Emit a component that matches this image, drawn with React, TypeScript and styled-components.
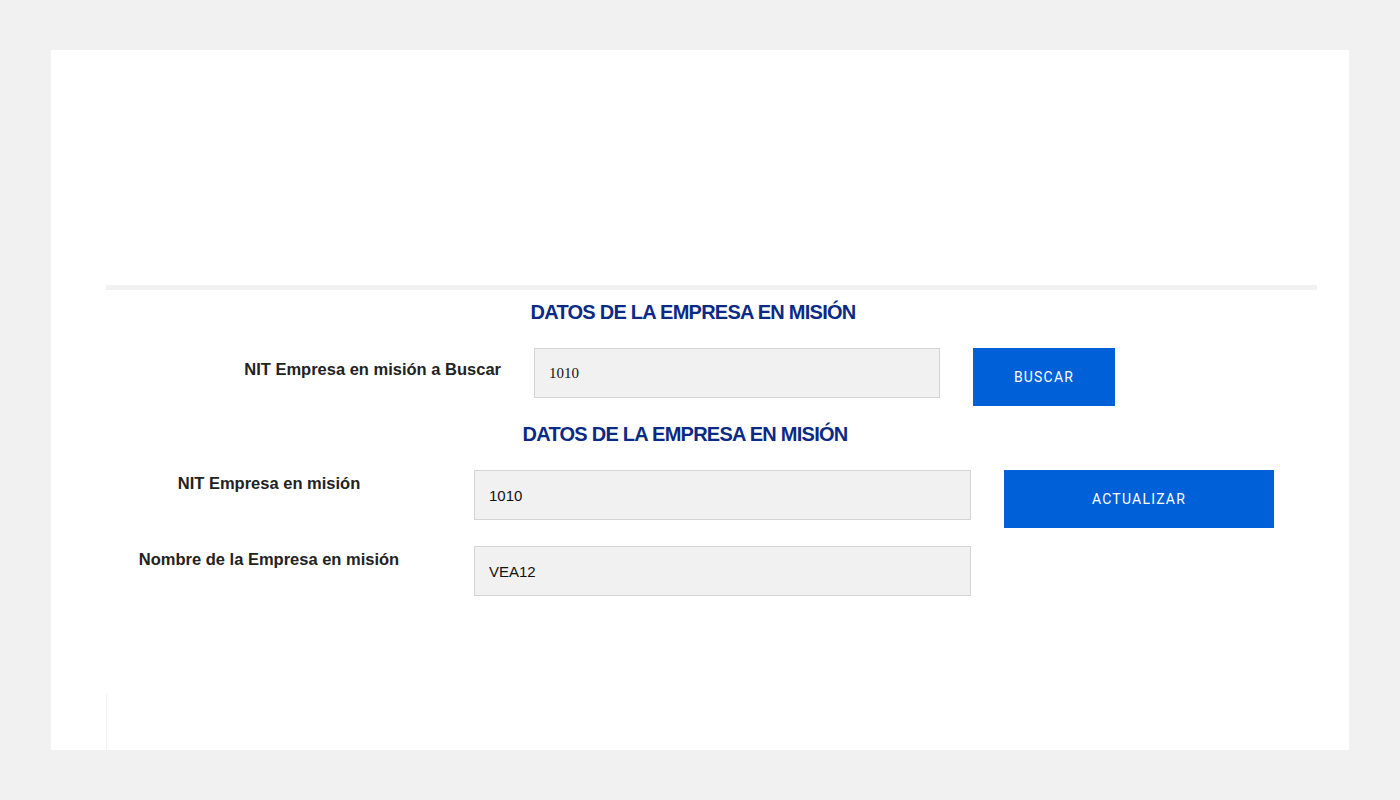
import React from 'react';
import styled, { createGlobalStyle } from 'styled-components';

const GlobalStyle = createGlobalStyle`
  html, body {
    margin: 0;
    padding: 0;
    background: #f1f1f1;
    font-family: "Liberation Sans", Arial, sans-serif;
  }
`;

const App: React.FC = () => {
  return (
    <>
      <GlobalStyle />
      <Page>
        <Panel>
          <Divider />
          <SectionTitle $shift={69}>DATOS DE LA EMPRESA EN MISIÓN</SectionTitle>
          <SearchRow>
            <SearchLabel>NIT Empresa en misión a Buscar</SearchLabel>
            <Field $width={406} $serif defaultValue="1010" />
            <ActionButton $width={142}>BUSCAR</ActionButton>
          </SearchRow>
          <SectionTitle $shift={85}>DATOS DE LA EMPRESA EN MISIÓN</SectionTitle>
          <FormGrid>
            <FormLabel>NIT Empresa en misión</FormLabel>
            <Field $width={497} defaultValue="1010" />
            <ActionButton $width={270}>ACTUALIZAR</ActionButton>
            <FormLabel>Nombre de la Empresa en misión</FormLabel>
            <Field $width={497} defaultValue="VEA12" />
          </FormGrid>
          <Footer />
        </Panel>
      </Page>
    </>
  );
};

const Page = styled.div`
  padding: 50px 51px;
  min-height: 800px;
  box-sizing: border-box;
`;

const Panel = styled.div`
  background: #ffffff;
  height: 700px;
  padding-top: 235px;
  box-sizing: border-box;
  display: flex;
  flex-direction: column;
`;

const Divider = styled.div`
  height: 5px;
  margin: 0 32px 0 55px;
  background: #f1f1f1;
`;

const SectionTitle = styled.h2<{ $shift: number }>`
  margin: 10px 0 0 55px;
  padding-right: ${({ $shift }) => $shift}px;
  text-align: center;
  font-family: "Liberation Sans", Arial, sans-serif;
  font-size: 20px;
  letter-spacing: -0.75px;
  line-height: 24px;
  font-weight: 700;
  color: #0b2a86;

  & + div {
    margin-top: 24px;
  }
`;

const SearchRow = styled.div`
  display: flex;
  align-items: flex-start;
  gap: 33px;
  margin-left: 55px;
  margin-bottom: 6px;
`;

const SearchLabel = styled.label`
  width: 395px;
  text-align: right;
  padding-top: 12px;
  font-size: 16.5px;
  line-height: 18px;
  font-weight: 700;
  color: #222222;
`;

const FormGrid = styled.div`
  display: grid;
  grid-template-columns: 326px 497px 270px;
  column-gap: 33px;
  row-gap: 18px;
  align-items: start;
  margin-left: 55px;

  & > input,
  & > button {
    margin-left: 9px;
  }
`;

const FormLabel = styled.label`
  text-align: center;
  padding-top: 4px;
  font-size: 16.5px;
  line-height: 18px;
  font-weight: 700;
  color: #222222;
`;

const Field = styled.input<{ $width: number; $serif?: boolean }>`
  width: ${({ $width }) => $width}px;
  height: 50px;
  box-sizing: border-box;
  padding: 0 14px;
  background: #f1f1f1;
  border: 1px solid #d4d4d4;
  font-family: ${({ $serif }) =>
    $serif ? '"Liberation Serif", "Times New Roman", serif' : '"Liberation Sans", Arial, sans-serif'};
  font-size: 15px;
  color: #111111;
  outline: none;
`;

const ActionButton = styled.button<{ $width: number }>`
  width: ${({ $width }) => $width}px;
  height: 58px;
  border: none;
  background: #0060d8;
  color: #ffffff;
  font-family: Roboto, "Liberation Sans", sans-serif;
  font-size: 14px;
  letter-spacing: 1.2px;
  cursor: pointer;
`;

const Footer = styled.div`
  margin-top: auto;
  margin-left: 55px;
  height: 56px;
  border-left: 1px solid #f3f3f3;
`;

export default App;
